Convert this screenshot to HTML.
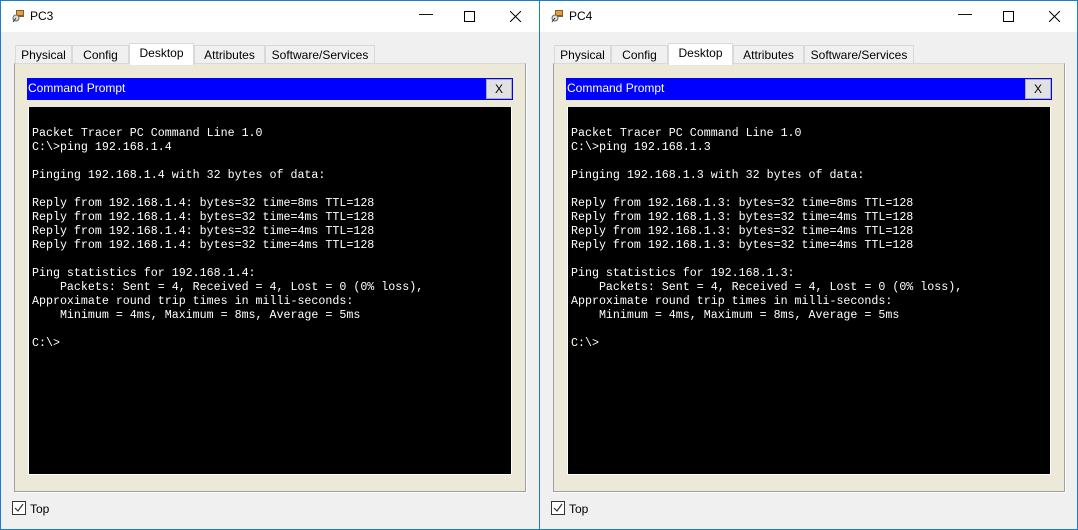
<!DOCTYPE html>
<html><head><style>
*{margin:0;padding:0;box-sizing:border-box}
body{width:1078px;height:530px;background:#f0f0f0;position:relative;overflow:hidden;font-family:"Liberation Sans",sans-serif}
.win{position:absolute;top:0;width:540px;height:530px;border:1px solid #1a7ad4;background:#f0f0f0}
.tb{position:absolute;left:0;top:0;right:0;height:31px;background:#fff}
.tt{position:absolute;left:29px;top:8px;font-size:12px;color:#000}
.ic{position:absolute;left:10px;top:8px;width:14px;height:14px}
.ctl{position:absolute;top:6px;font-size:14px;color:#000}
.tab{position:absolute;top:44px;height:19px;border:1px solid #d9d9d9;border-bottom:none;background:#f0f0f0;font-size:12px;text-align:center;line-height:18px}
.tab.a{top:42px;height:22px;background:#fff;z-index:2}
.panel{position:absolute;left:13px;top:62px;width:512px;height:429px;border:1px solid #a0a0a0;border-top-color:#d9d9d9;background:#ece9d8;box-shadow:1px 1px 0 #fff}
.cp{position:absolute;left:12px;top:14px;width:486px;height:22px;background:#0000ff;color:#fff;font-size:12px;line-height:21px;padding-left:1px}
.cx{position:absolute;right:1px;top:1px;width:26px;height:20px;background:#e1e1e1;border:1px solid #adadad;color:#000;text-align:center;line-height:18px;font-size:12px}
.term{position:absolute;left:13px;top:43px;width:484px;height:368px;background:#000;border:1px solid #fff;border-top:none}
pre{position:absolute;left:3px;top:20px;color:#fff;font-family:"Liberation Mono",monospace;font-size:11.65px;line-height:14px}
.chk{position:absolute;left:11px;top:500px;width:14px;height:14px;border:1px solid #333;background:#fff}
.top{position:absolute;left:29px;top:501px;font-size:12px}
</style></head><body>

<div class="win" style="left:0">
<div class="tb">
<svg class="ic" viewBox="0 0 14 14"><rect x="5" y="1" width="8" height="7" fill="#8b5a2b"/><rect x="6" y="2" width="6" height="4" fill="#e0a040"/><circle cx="5" cy="9" r="3" fill="#ddd" stroke="#666"/><path d="M5 9 L2 13" stroke="#333"/></svg>
<div class="tt">PC3</div>
<div class="ctl" style="left:418px;top:4px">—</div>
<svg style="position:absolute;left:463px;top:10px" width="11" height="11"><rect x="0.5" y="0.5" width="10" height="10" fill="none" stroke="#000"/></svg>
<svg style="position:absolute;left:509px;top:10px" width="11" height="11"><path d="M0 0L11 11M11 0L0 11" stroke="#000"/></svg>
</div>
<div class="tab" style="left:14px;width:57px">Physical</div>
<div class="tab" style="left:71px;width:57px">Config</div>
<div class="tab a" style="left:128px;width:65px">Desktop</div>
<div class="tab" style="left:193px;width:71px">Attributes</div>
<div class="tab" style="left:264px;width:110px">Software/Services</div>
<div class="panel">
<div class="cp">Command Prompt<div class="cx">X</div></div>
<div class="term"><pre>Packet Tracer PC Command Line 1.0
C:\&gt;ping 192.168.1.4

Pinging 192.168.1.4 with 32 bytes of data:

Reply from 192.168.1.4: bytes=32 time=8ms TTL=128
Reply from 192.168.1.4: bytes=32 time=4ms TTL=128
Reply from 192.168.1.4: bytes=32 time=4ms TTL=128
Reply from 192.168.1.4: bytes=32 time=4ms TTL=128

Ping statistics for 192.168.1.4:
    Packets: Sent = 4, Received = 4, Lost = 0 (0% loss),
Approximate round trip times in milli-seconds:
    Minimum = 4ms, Maximum = 8ms, Average = 5ms

C:\&gt;</pre></div>
</div>
<div class="chk"><svg width="12" height="12" style="position:absolute;left:0;top:0"><path d="M2 6L5 9L10 2" stroke="#333" fill="none" stroke-width="1.2"/></svg></div>
<div class="top">Top</div>
</div>

<div class="win" style="left:539px;width:539px">
<div class="tb">
<svg class="ic" viewBox="0 0 14 14"><rect x="5" y="1" width="8" height="7" fill="#8b5a2b"/><rect x="6" y="2" width="6" height="4" fill="#e0a040"/><circle cx="5" cy="9" r="3" fill="#ddd" stroke="#666"/><path d="M5 9 L2 13" stroke="#333"/></svg>
<div class="tt">PC4</div>
<div class="ctl" style="left:418px;top:4px">—</div>
<svg style="position:absolute;left:463px;top:10px" width="11" height="11"><rect x="0.5" y="0.5" width="10" height="10" fill="none" stroke="#000"/></svg>
<svg style="position:absolute;left:509px;top:10px" width="11" height="11"><path d="M0 0L11 11M11 0L0 11" stroke="#000"/></svg>
</div>
<div class="tab" style="left:14px;width:57px">Physical</div>
<div class="tab" style="left:71px;width:57px">Config</div>
<div class="tab a" style="left:128px;width:65px">Desktop</div>
<div class="tab" style="left:193px;width:71px">Attributes</div>
<div class="tab" style="left:264px;width:110px">Software/Services</div>
<div class="panel">
<div class="cp">Command Prompt<div class="cx">X</div></div>
<div class="term"><pre>Packet Tracer PC Command Line 1.0
C:\&gt;ping 192.168.1.3

Pinging 192.168.1.3 with 32 bytes of data:

Reply from 192.168.1.3: bytes=32 time=8ms TTL=128
Reply from 192.168.1.3: bytes=32 time=4ms TTL=128
Reply from 192.168.1.3: bytes=32 time=4ms TTL=128
Reply from 192.168.1.3: bytes=32 time=4ms TTL=128

Ping statistics for 192.168.1.3:
    Packets: Sent = 4, Received = 4, Lost = 0 (0% loss),
Approximate round trip times in milli-seconds:
    Minimum = 4ms, Maximum = 8ms, Average = 5ms

C:\&gt;</pre></div>
</div>
<div class="chk"><svg width="12" height="12" style="position:absolute;left:0;top:0"><path d="M2 6L5 9L10 2" stroke="#333" fill="none" stroke-width="1.2"/></svg></div>
<div class="top">Top</div>
</div>

</body></html>
